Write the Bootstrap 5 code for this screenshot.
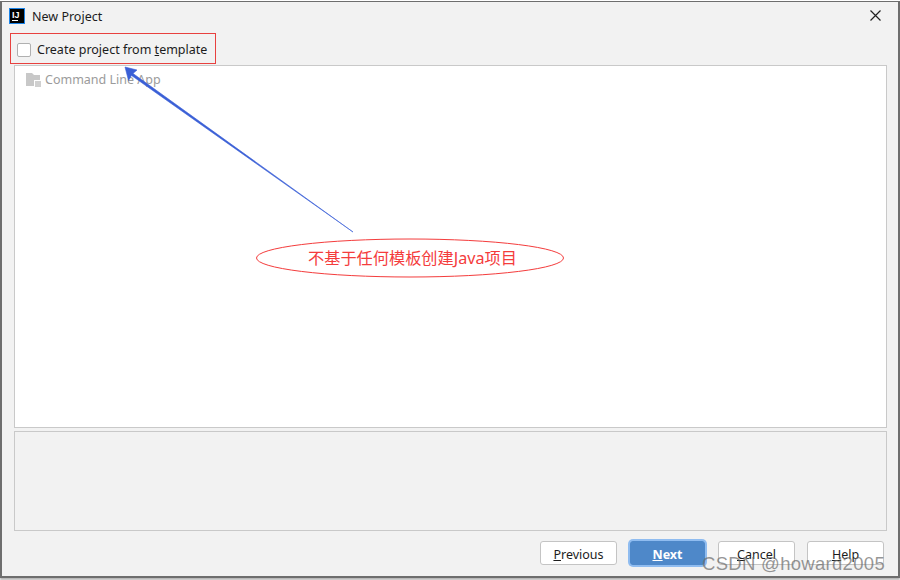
<!DOCTYPE html>
<html lang="zh-CN">
<head>
    <meta charset="UTF-8">
    <meta name="viewport" content="width=device-width, initial-scale=1.0">
    <title>New Project</title>
    <link href="https://cdn.jsdelivr.net/npm/bootstrap@5.3.0/dist/css/bootstrap.min.css" rel="stylesheet">
    <style>
        html, body { width: 900px; height: 580px; overflow: hidden; background: #fff; }
        body { font-family: "Noto Sans", "Noto Sans CJK SC", sans-serif; font-size: 12.5px; color: #1c1c1c; position: relative; }
        .ij-window { width: 900px; height: 577px; margin-top: 1px; background: #f2f2f2; border: 2px solid #6e6e6e; border-top-width: 1px; box-shadow: 0 2px 2px #b4b4b4; }
        .ij-titlebar { height: 31px; padding: 6px 17px 0 7px; }
        .ij-logo { width: 16px; height: 16px; background: #000; border: 1px solid #1c84e8; color: #fff; font: bold 9px/8px "Liberation Sans", sans-serif; padding: 2px 0 0 2px; }
        .ij-logo i { display: block; width: 6px; height: 1px; background: #fff; margin-top: 1px; }
        .ij-title { font-size: 12.5px; line-height: 16px; margin: 1px 0 0 7px; }
        .ij-close { width: 11px; height: 11px; margin-top: 2px; }
        .ij-options { height: 32px; padding-left: 8px; }
        .ij-template { width: 206px; height: 31px; border: 1px solid #e8413f; padding: 2px 0 0 6px; }
        .ij-template-text { margin-top: 2px; }
        .ij-box { width: 14px; height: 14px; border: 1px solid #b0b0b0; border-radius: 2px; background: #fff; margin-right: 6px; }
        .ij-list { height: 363px; margin: 0 11px 0 12px; background: #fff; border: 1px solid #c9c9c9; padding: 5px 11px; color: #9b9b9b; }
        .ij-folder { width: 15px; height: 14px; margin-right: 4px; }
        .ij-desc { height: 100px; margin: 3px 11px 0 12px; border: 1px solid #c9c9c9; }
        .ij-actions { padding: 10px 14px 0 0; gap: 12px; }
        .ij-btn { width: 77px; height: 24px; padding: 4px 0 0; font-size: 12.5px; line-height: 18px; color: #1c1c1c; background: #fff; border: 1px solid #c4c4c4; border-radius: 3px; }
        .ij-btn-default { width: 75px; margin: 0 1px; color: #fff; font-weight: 700; background: #4e88c9; border-color: #4e88c9; box-shadow: 0 0 0 2px #8fbcf0; }
        .ij-overlay { position: absolute; left: 0; top: 0; }
        .ij-note { position: absolute; left: 256px; top: 239px; width: 308px; height: 38px; padding-left: 5px; line-height: 38px; text-align: center; color: #f43c3c; font-size: 16.2px; }
        .ij-mark { position: absolute; left: 702px; top: 551px; font-family: "Liberation Sans", sans-serif; font-size: 18.5px; line-height: 26px; color: rgba(110, 110, 110, .72); letter-spacing: .3px; }
    </style>
</head>
<body>
<div class="ij-window d-flex flex-column">
    <div class="ij-titlebar d-flex align-items-start">
        <div class="ij-logo">IJ<i></i></div>
        <div class="ij-title">New Project</div>
        <svg class="ij-close ms-auto" viewBox="0 0 11 11"><path d="M.5.5l10 10M10.5.5l-10 10" stroke="#222" stroke-width="1.2" fill="none"/></svg>
    </div>
    <div class="ij-options d-flex">
        <div class="ij-template d-flex align-items-center">
            <span class="ij-box"></span>
            <span class="ij-template-text">Create project from <u>t</u>emplate</span>
        </div>
    </div>
    <div class="ij-list">
        <div class="d-flex align-items-center">
            <svg class="ij-folder" viewBox="0 0 15 14"><path d="M0 0h6l2 2h6v5H8v6H0z" fill="#c8c8c8"/><path d="M9 8h6v6H9z" fill="#d0d0d0"/></svg>
            <span>Command Line App</span>
        </div>
    </div>
    <div class="ij-desc"></div>
    <div class="ij-actions d-flex justify-content-end">
        <button type="button" class="btn ij-btn"><u>P</u>revious</button>
        <button type="button" class="btn ij-btn ij-btn-default"><u>N</u>ext</button>
        <button type="button" class="btn ij-btn"><u>C</u>ancel</button>
        <button type="button" class="btn ij-btn"><u>H</u>elp</button>
    </div>
</div>

<svg class="ij-overlay" width="900" height="580" viewBox="0 0 900 580">
    <path d="M125 67l12 3-4 3.500L353 232 131.500 75.500l-3 5z" fill="#3a5fd6" stroke="#3a5fd6" stroke-width=".6"/>
    <ellipse cx="410" cy="258" rx="153.500" ry="19" fill="#fff" stroke="#f43c3c" stroke-width="1"/>
</svg>
<div class="ij-note">不基于任何模板创建Java项目</div>
<div class="ij-mark">CSDN @howard2005</div>
</body>
</html>
